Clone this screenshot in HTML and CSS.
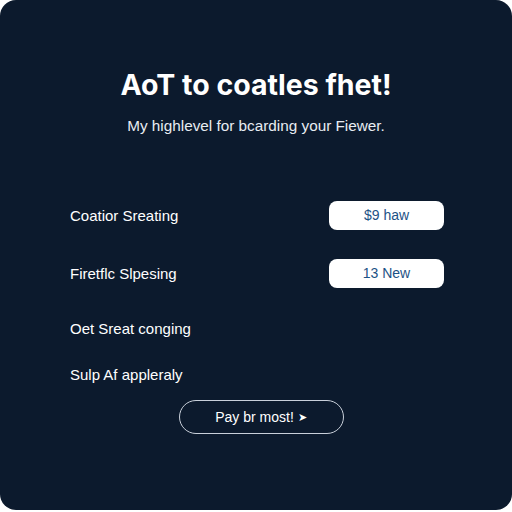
FILE: index.html
```html
<!DOCTYPE html>
<html>
<head>
<meta charset="utf-8">
<link rel="stylesheet" href="styles.css">
</head>
<body>
<main class="card">
  <h1 class="title">AoT to coatles fhet!</h1>
  <p class="subtitle">My highlevel for bcarding your Fiewer.</p>
  <ul class="list">
    <li class="row"><span class="label">Coatior Sreating</span><span class="pill">$9 haw</span></li>
    <li class="row"><span class="label">Firetflc Slpesing</span><span class="pill">13 New</span></li>
    <li class="row plain first-plain"><span class="label">Oet Sreat conging</span></li>
    <li class="row plain"><span class="label">Sulp Af appleraly</span></li>
  </ul>
  <button class="cta">Pay br most! <span class="arrow">&#10148;</span></button>
</main>
</body>
</html>
```

FILE: styles.css
```css
html, body {
  margin: 0;
  padding: 0;
  background: #ffffff;
}

.card {
  box-sizing: border-box;
  width: 512px;
  height: 510px;
  background: #0c1a2d;
  border-radius: 16px;
  padding: 67px 0 0;
  display: flex;
  flex-direction: column;
  align-items: center;
  font-family: "Liberation Sans", Arial, sans-serif;
  color: #ffffff;
}

.title {
  margin: 0;
  font-family: Inter, "Liberation Sans", sans-serif;
  font-weight: 700;
  font-size: 28.5px;
  line-height: 36px;
  letter-spacing: 0;
}

.subtitle {
  margin: 13px 0 0;
  font-size: 15.3px;
  line-height: 20px;
  color: #e8ecf2;
}

.list {
  list-style: none;
  margin: 64px 0 0;
  padding: 0 68px 0 70px;
  width: 100%;
  box-sizing: border-box;
  display: flex;
  flex-direction: column;
  gap: 28px;
}

.row {
  display: flex;
  align-items: center;
  justify-content: space-between;
  height: 30px;
}

.row.plain {
  height: 18px;
}

.row.first-plain {
  margin-top: 3px;
}

.label {
  font-size: 15px;
  color: #ffffff;
}

.pill {
  width: 115px;
  height: 29px;
  border-radius: 8px;
  background: #ffffff;
  color: #1d5286;
  font-size: 14px;
  display: flex;
  align-items: center;
  justify-content: center;
}

.cta {
  margin: 17px 0 0 10px;
  width: 165px;
  height: 34px;
  border-radius: 17px;
  border: 1px solid #c9d0da;
  background: transparent;
  color: #ffffff;
  font-family: "Liberation Sans", Arial, sans-serif;
  font-size: 14px;
  display: flex;
  align-items: center;
  justify-content: center;
  gap: 4px;
}

.arrow {
  font-size: 11px;
}
```
